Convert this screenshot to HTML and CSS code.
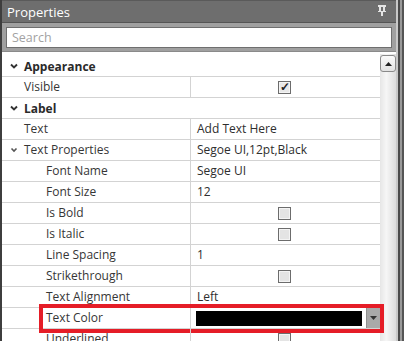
FILE: index.html
```html
<!DOCTYPE html>
<html lang="en">
<head>
  <meta charset="UTF-8">
  <title>Properties</title>
  <link rel="stylesheet" href="styles.css">
</head>
<body>
  <div class="panel">
    <div class="panel-main">
      <div class="panel-header">
        <span class="panel-title">Properties</span>
        <svg class="pin" width="8" height="11" viewBox="0 0 8 11">
          <rect x="0" y="0" width="8" height="2" fill="#e4e4e4"/>
          <rect x="1" y="2" width="2" height="5" fill="#e4e4e4"/>
          <rect x="5" y="2" width="2" height="5" fill="#e4e4e4"/>
          <rect x="0" y="6" width="8" height="1" fill="#e4e4e4"/>
          <rect x="3" y="7" width="2" height="4" fill="#e4e4e4"/>
        </svg>
      </div>
      <div class="search-bar">
        <div class="search-box">Search</div>
      </div>
      <div class="grid-area">
        <div class="grid">
          <!-- Appearance -->
          <div class="row category">
            <span class="chev"><svg width="8" height="6" viewBox="0 0 8 6"><path d="M1 1.5 L4 4.5 L7 1.5" fill="none" stroke="#333" stroke-width="1.9"/></svg></span>
            <span class="cat-name">Appearance</span>
          </div>
          <div class="row">
            <div class="name">Visible</div>
            <div class="value center"><span class="check checked">&#10003;</span></div>
          </div>
          <!-- Label -->
          <div class="row category">
            <span class="chev"><svg width="8" height="6" viewBox="0 0 8 6"><path d="M1 1.5 L4 4.5 L7 1.5" fill="none" stroke="#333" stroke-width="1.9"/></svg></span>
            <span class="cat-name">Label</span>
          </div>
          <div class="row">
            <div class="name">Text</div>
            <div class="value">Add Text Here</div>
          </div>
          <div class="row">
            <div class="name expander"><span class="chev small"><svg width="8" height="6" viewBox="0 0 8 6"><path d="M1.5 1.5 L4 4 L6.5 1.5" fill="none" stroke="#555" stroke-width="1.6"/></svg></span>Text Properties</div>
            <div class="value">Segoe UI,12pt,Black</div>
          </div>
          <div class="row">
            <div class="name sub">Font Name</div>
            <div class="value">Segoe UI</div>
          </div>
          <div class="row">
            <div class="name sub">Font Size</div>
            <div class="value">12</div>
          </div>
          <div class="row">
            <div class="name sub">Is Bold</div>
            <div class="value center"><span class="check"></span></div>
          </div>
          <div class="row">
            <div class="name sub">Is Italic</div>
            <div class="value center"><span class="check"></span></div>
          </div>
          <div class="row">
            <div class="name sub">Line Spacing</div>
            <div class="value">1</div>
          </div>
          <div class="row">
            <div class="name sub">Strikethrough</div>
            <div class="value center"><span class="check"></span></div>
          </div>
          <div class="row">
            <div class="name sub">Text Alignment</div>
            <div class="value">Left</div>
          </div>
          <div class="row highlight-row">
            <div class="name sub">Text Color</div>
            <div class="value color-value">
              <span class="swatch"></span>
              <span class="drop"><svg width="7" height="4" viewBox="0 0 7 4"><path d="M0 0 H7 L3.5 4 Z" fill="#333"/></svg></span>
            </div>
            <div class="callout"></div>
          </div>
          <div class="row">
            <div class="name sub">Underlined</div>
            <div class="value center"><span class="check"></span></div>
          </div>
        </div>
        <div class="scrollbar">
          <div class="scroll-btn"><svg width="7" height="4" viewBox="0 0 7 4"><path d="M0 4 H7 L3.5 0 Z" fill="#222"/></svg></div>
          <div class="scroll-track"></div>
        </div>
      </div>
    </div>
    <div class="frame-edge"></div>
  </div>
</body>
</html>
```

FILE: styles.css
```css
* { margin: 0; padding: 0; box-sizing: border-box; }
html, body { height: 100%; }
body {
  font-family: "Open Sans", "Noto Sans", sans-serif;
  font-size: 12px;
  color: #333;
  background: #fff;
  overflow: hidden;
}
.panel {
  display: flex;
  height: 341px;
  border-left: 2px solid #3e3e3e;
}
.panel-main {
  flex: 1;
  display: flex;
  flex-direction: column;
  min-width: 0;
}
/* Title bar */
.panel-header {
  height: 23px;
  background: #6e6e6e;
  border-top: 1px solid #5a5a5a;
  border-bottom: 1px solid #555;
  display: flex;
  align-items: center;
  justify-content: space-between;
  padding: 0 10px 0 5px;
}
.panel-title {
  color: #fff;
  font-size: 13px;
}
.pin { display: block; margin-top: -2px; }
/* Search */
.search-bar {
  height: 29px;
  background: #a0a0a0;
  padding: 4px 4px 3px 4px;
  border-bottom: 1px solid #8a8a8a;
}
.search-box {
  height: 21px;
  background: #fff;
  border: 1px solid #6f6f6f;
  color: #a2a2a2;
  font-size: 12.5px;
  line-height: 19px;
  padding-left: 5px;
}
/* Grid */
.grid-area {
  flex: 1;
  display: flex;
  padding-top: 2px;
  min-height: 0;
}
.grid {
  flex: 1;
  padding-top: 2px;
}
.row {
  position: relative;
  display: flex;
  height: 21px;
  border-bottom: 1px solid #d3d3d3;
}
.category {
  align-items: center;
}
.chev {
  width: 22px;
  display: flex;
  justify-content: center;
  padding-left: 2px;
}
.chev svg { display: block; }
.cat-name {
  font-weight: bold;
  color: #2a2a2a;
}
.name {
  width: 189px;
  border-right: 1px solid #d3d3d3;
  line-height: 20px;
  padding-left: 22px;
  color: #363636;
  white-space: nowrap;
}
.name.expander {
  display: flex;
  align-items: center;
  padding-left: 0;
}
.name.sub { padding-left: 44px; }
.value {
  flex: 1;
  line-height: 20px;
  padding-left: 6px;
  color: #2e2e2e;
  white-space: nowrap;
}
.value.center {
  display: flex;
  align-items: center;
  justify-content: center;
  padding-left: 0;
  padding-right: 2px;
}
.check {
  width: 13px;
  height: 13px;
  border: 1px solid #6c6c6c;
  background: #e4e4e4;
  box-shadow: inset 0 0 0 1px #f4f4f4;
  display: flex;
  align-items: center;
  justify-content: center;
  font-size: 12px;
  line-height: 1;
  color: #222;
}
.check.checked { background: #e8e8e8; font-weight: bold; }
/* Colour picker cell */
.color-value {
  display: flex;
  align-items: center;
  padding: 0 0 0 5px;
  gap: 4px;
}
.swatch {
  flex: 1;
  height: 15px;
  background: #000;
}
.drop {
  width: 14px;
  height: 20px;
  background: #a9a9a9;
  border-left: 1px solid #8f8f8f;
  display: flex;
  align-items: center;
  justify-content: center;
}
.callout {
  position: absolute;
  left: 37px;
  top: -4px;
  width: 345px;
  height: 29px;
  border: 4px solid #e51d27;
  pointer-events: none;
}
/* Scrollbar */
.scrollbar {
  width: 16px;
  display: flex;
  flex-direction: column;
  padding-top: 1px;
  background: linear-gradient(to right, #e6e6e6, #f6f6f6 40%, #dcdcdc);
}
.scroll-btn {
  height: 17px;
  border: 1px solid #8a8a8a;
  border-radius: 3px;
  background: linear-gradient(#fbfbfb, #e2e2e2);
  display: flex;
  align-items: center;
  justify-content: center;
}
.scroll-track { flex: 1; }
.frame-edge {
  width: 8px;
  background: linear-gradient(to right, #c8c8c8 0, #c8c8c8 2px, #4a4a4a 2px, #4a4a4a 4px, #9a9a9a 4px, #9a9a9a 6px, #555 6px);
}
```
